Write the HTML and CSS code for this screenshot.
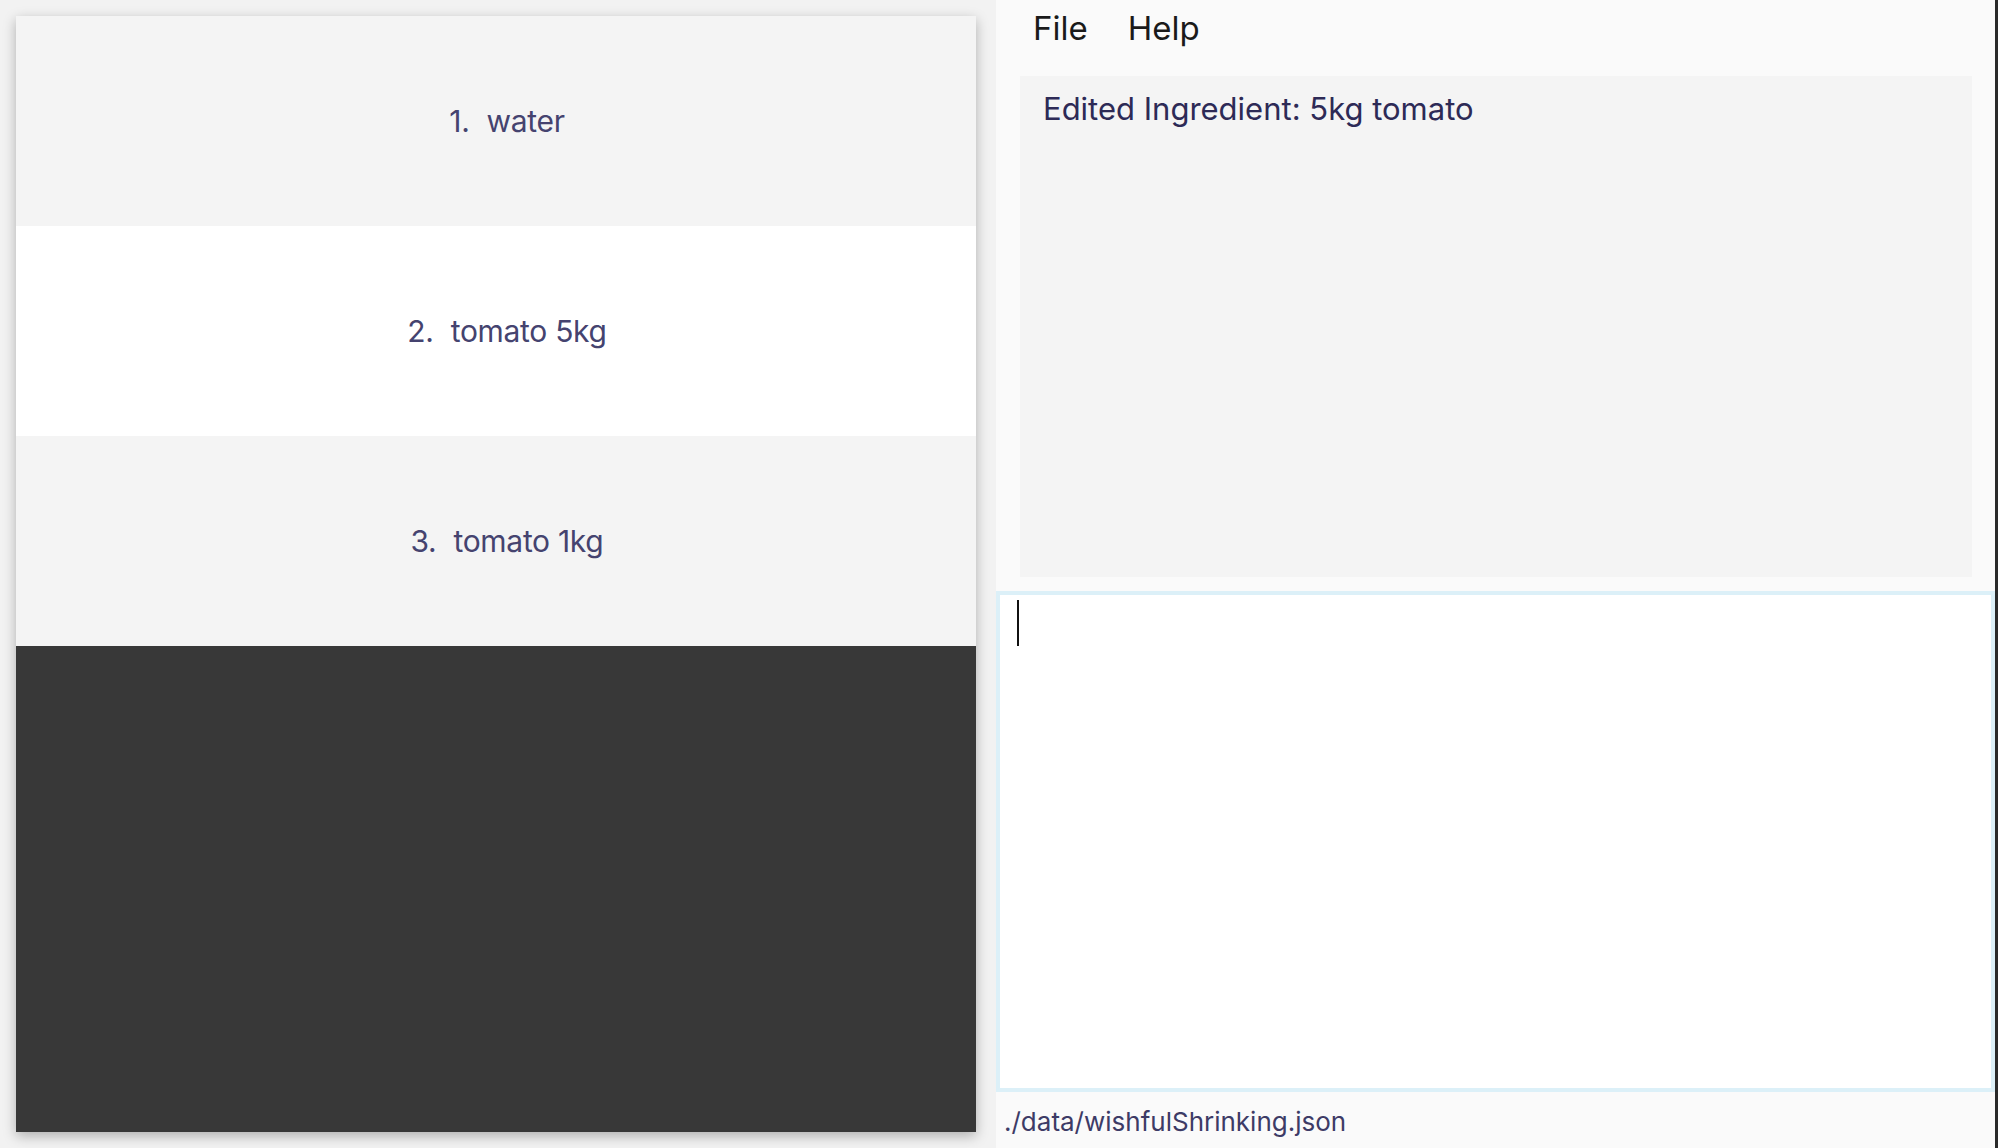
FILE: index.html
```html
<!DOCTYPE html>
<html lang="en">
<head>
<meta charset="utf-8">
<title>Wishful Shrinking</title>
<link rel="stylesheet" href="styles.css">
</head>
<body>
<div class="app">
  <div class="left">
    <div class="card">
      <div class="row odd"><span class="idx">1.</span><span class="name">water</span></div>
      <div class="row even"><span class="idx">2.</span><span class="name">tomato 5kg</span></div>
      <div class="row odd"><span class="idx">3.</span><span class="name">tomato 1kg</span></div>
      <div class="empty"></div>
    </div>
  </div>
  <div class="right">
    <div class="menubar">
      <span class="menu">File</span>
      <span class="menu">Help</span>
    </div>
    <div class="result-wrap">
      <div class="result">Edited Ingredient: 5kg tomato</div>
    </div>
    <div class="command"><span class="caret"></span></div>
    <div class="status">./data/wishfulShrinking.json</div>
  </div>
</div>
</body>
</html>
```
FILE: styles.css
```css
* { box-sizing: border-box; }
html, body { margin: 0; padding: 0; }
body {
  width: 1998px;
  height: 1148px;
  overflow: hidden;
  background: #f2f2f2;
  font-family: "Inter", "Open Sans", sans-serif;
}
.app {
  display: flex;
  width: 1998px;
  height: 1148px;
}
.left {
  width: 996px;
  padding: 16px 20px 16px 16px;
  background: #f2f2f2;
}
.card {
  width: 960px;
  height: 1116px;
  display: flex;
  flex-direction: column;
  box-shadow: 0 4px 12px rgba(0, 0, 0, 0.28);
}
.row {
  height: 210px;
  display: flex;
  align-items: center;
  justify-content: center;
  padding-left: 22px;
  font-size: 30px;
  letter-spacing: -0.3px;
  color: #45436f;
}
.row.odd { background: #f4f4f4; }
.row.even { background: #ffffff; }
.idx { margin-right: 17px; }
.empty { flex: 1; background: #383838; }

.right {
  width: 1002px;
  background: #fafafa;
  border-right: 3px solid #2a2a2a;
  display: flex;
  flex-direction: column;
}
.menubar {
  height: 62px;
  display: flex;
  align-items: center;
  padding-left: 37px;
  gap: 40px;
  font-size: 33px;
  color: #1a1a1a;
  padding-bottom: 6px;
}
.result-wrap {
  padding: 14px 23px 14px 24px;
}
.result {
  height: 501px;
  background: #f4f4f4;
  padding: 14px 23px;
  font-size: 31px;
  color: #2d2a56;
}
.command {
  height: 501px;
  background: #ffffff;
  border: 4px solid #dcf0f8;
  padding: 5px 0 0 17px;
}
.caret {
  display: block;
  width: 2px;
  height: 46px;
  background: #111;
}
.status {
  flex: 1;
  display: flex;
  align-items: center;
  padding-left: 8px;
  padding-top: 3px;
  font-size: 26px;
  color: #3d3b66;
}
```
